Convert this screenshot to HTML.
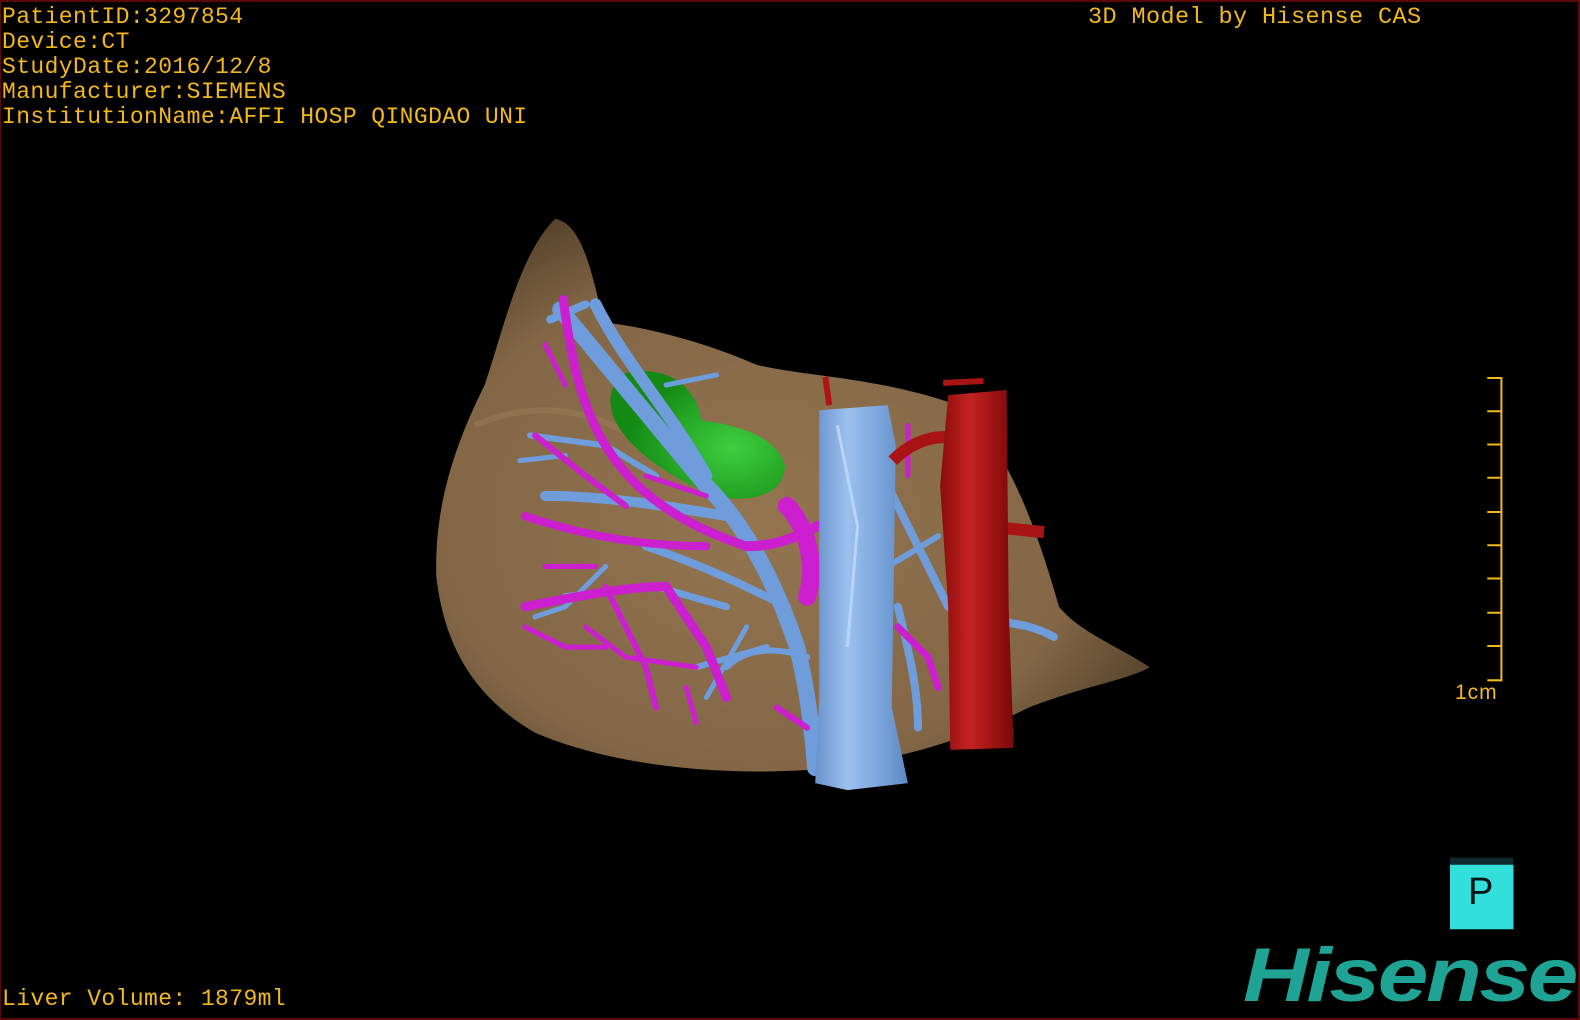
<!DOCTYPE html>
<html><head><meta charset="utf-8"><style>
html,body{margin:0;padding:0;background:#000;}
#s{position:relative;width:1580px;height:1020px;background:#000;overflow:hidden;box-sizing:border-box;border:2px solid #5a0808;border-left:1px solid #5a0808;}
.t{position:absolute;font-family:"Liberation Mono",monospace;font-size:23px;color:#f2b81c;line-height:25px;white-space:pre;letter-spacing:0.4px;}
svg{position:absolute;left:0;top:0;}
</style></head><body><div id="s">
<svg width="1580" height="1020" viewBox="0 0 1568 1012" preserveAspectRatio="none">
<defs>
<radialGradient id="lv" cx="0.45" cy="0.55" r="0.65">
<stop offset="0" stop-color="#947550"/><stop offset="0.7" stop-color="#826646"/><stop offset="1" stop-color="#4e3c26"/>
</radialGradient>
<linearGradient id="cy" x1="0" x2="1"><stop offset="0" stop-color="#6a92cc"/><stop offset="0.35" stop-color="#9cc0ee"/><stop offset="0.7" stop-color="#7aa4dc"/><stop offset="1" stop-color="#5f88c2"/></linearGradient>
<linearGradient id="ao" x1="0" x2="1"><stop offset="0" stop-color="#8a0c0c"/><stop offset="0.4" stop-color="#c42222"/><stop offset="1" stop-color="#7a0808"/></linearGradient>
<radialGradient id="gb" cx="0.7" cy="0.6" r="0.6"><stop offset="0" stop-color="#3fcf3f"/><stop offset="1" stop-color="#148a14"/></radialGradient>
</defs>
<path d="M550 215 C575 220 585 260 598 318 C640 322 700 338 750 360 C800 372 870 372 950 400 C1000 440 1030 530 1050 600 C1070 625 1110 640 1140 660 C1120 672 1070 680 1020 700 C960 730 900 752 800 762 C700 768 600 755 530 725 C470 690 440 640 432 570 C430 500 450 440 480 380 C500 320 515 250 550 215 Z" fill="url(#lv)"/>
<path d="M470 420 C540 390 600 410 640 440" stroke="#a0825c" stroke-width="6" fill="none" opacity="0.4"/>
<path d="M620 368 C660 360 690 380 695 415 C730 420 770 430 778 460 C778 490 740 498 710 490 C670 475 630 450 612 420 C600 400 603 378 620 368 Z" fill="url(#gb)"/>
<g fill="none" stroke-linecap="round" stroke="#6f9ddb">
<path d="M555 305 C600 360 650 420 700 480 C740 520 770 580 790 640 C800 680 805 720 808 760" stroke-width="16"/>
<path d="M590 300 C620 360 660 400 700 470" stroke-width="12"/>
<path d="M540 490 C600 490 660 500 720 510" stroke-width="10"/>
<path d="M545 315 L580 300" stroke-width="8"/>
<path d="M525 430 L600 440 L650 470" stroke-width="6"/>
<path d="M640 540 C700 560 740 580 780 600" stroke-width="8"/>
<path d="M560 590 L650 580 L720 600" stroke-width="7"/>
<path d="M690 660 L760 640" stroke-width="6"/>
<path d="M880 480 C900 520 920 560 940 600 C980 620 1010 610 1045 630" stroke-width="8"/>
<path d="M890 600 C900 640 910 680 910 720" stroke-width="8"/>
<path d="M720 660 C740 640 770 640 800 650" stroke-width="6"/>
<path d="M880 560 L930 530" stroke-width="6"/>
<path d="M660 380 L710 370" stroke-width="5"/>
<path d="M515 455 L560 450" stroke-width="5"/>
<path d="M600 560 L560 600 L530 610" stroke-width="5"/>
<path d="M740 620 L700 690" stroke-width="5"/>
</g>
<g fill="none" stroke-linecap="round" stroke="#cc1fd0">
<path d="M558 295 C565 350 575 400 600 440 C630 490 680 520 740 540" stroke-width="9"/>
<path d="M520 510 C580 530 640 540 700 540" stroke-width="8"/>
<path d="M520 600 C570 590 620 580 660 580 L700 640 L720 690" stroke-width="9"/>
<path d="M600 580 L640 660 L650 700" stroke-width="6"/>
<path d="M580 620 L620 650 L690 660" stroke-width="5"/>
<path d="M530 430 L580 470 L620 500" stroke-width="6"/>
<path d="M640 470 L700 490" stroke-width="5"/>
<path d="M780 500 C800 520 810 560 800 590" stroke-width="18"/>
<path d="M740 540 C770 540 790 530 810 520" stroke-width="10"/>
<path d="M770 700 L800 720" stroke-width="6"/>
<path d="M890 620 L920 650 L930 680" stroke-width="7"/>
<path d="M900 420 L900 470" stroke-width="5"/>
<path d="M540 340 L560 380" stroke-width="5"/>
<path d="M520 620 L560 640 L600 640" stroke-width="5"/>
<path d="M540 560 L590 560" stroke-width="5"/>
<path d="M680 680 L690 715" stroke-width="5"/>
</g>
<path d="M812 405 L880 400 L888 440 L884 700 L900 775 L840 782 L808 775 L812 690 Z" fill="url(#cy)"/>
<path d="M830 420 L850 520 L840 640" stroke="#b8d4f6" stroke-width="3" fill="none"/>
<path d="M818 372 L822 400" stroke="#b01515" stroke-width="6"/>
<path d="M885 455 C900 440 920 430 940 432" stroke="#a81414" stroke-width="12" fill="none"/>
<path d="M995 522 L1035 526" stroke="#a81414" stroke-width="12"/>
<path d="M940 390 L998 385 L1000 600 L1005 740 L942 742 L940 600 L932 480 Z" fill="url(#ao)"/>
<path d="M935 378 L975 376" stroke="#a81414" stroke-width="6"/>
<g stroke="#f2b81c" stroke-width="2" fill="none">
<path d="M1475 373 H1489 V673 H1475"/>
<path d="M1475 406 H1489 M1475 439 H1489 M1475 472 H1489 M1475 506 H1489 M1475 539 H1489 M1475 572 H1489 M1475 606 H1489 M1475 639 H1489"/>
</g>
<rect x="1438" y="849" width="63" height="8" fill="#0e2a2e"/>
<rect x="1438" y="856" width="63" height="64" fill="#33dfdb"/>
</svg>
<div class="t" style="left:1px;top:3px">PatientID:3297854
Device:CT
StudyDate:2016/12/8
Manufacturer:SIEMENS
InstitutionName:AFFI HOSP QINGDAO UNI</div>
<div class="t" style="left:1087px;top:3px;font-size:23.5px;letter-spacing:0.4px">3D Model by Hisense CAS</div>
<div class="t" style="left:1px;top:985px">Liver Volume: 1879ml</div>
<div class="t" style="left:1454px;top:678px;font-family:'Liberation Sans',sans-serif;font-size:21px;letter-spacing:1px;">1cm</div>
<div style="position:absolute;left:1467px;top:868px;font-family:'Liberation Sans',sans-serif;font-size:38px;line-height:44px;color:#051515;">P</div>
<div style="position:absolute;left:1242px;top:934px;font-family:'Liberation Sans',sans-serif;font-weight:bold;font-style:italic;font-size:76px;line-height:80px;color:#1fa394;letter-spacing:-2px;transform:scaleX(1.2);transform-origin:left;">Hisense</div>
</div></body></html>
